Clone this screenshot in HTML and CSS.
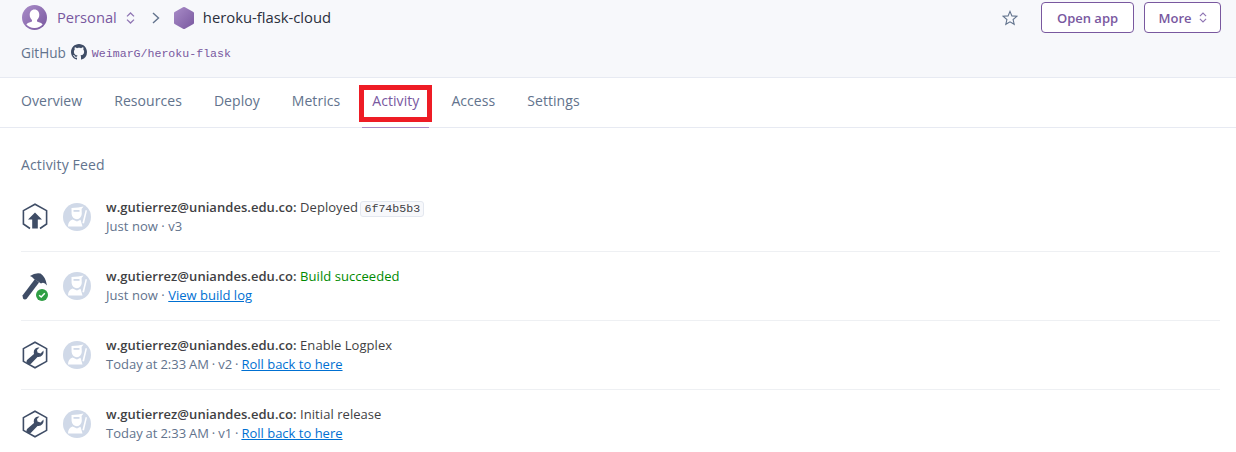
FILE: index.html
```html
<!DOCTYPE html>
<html lang="en">
<head>
<meta charset="utf-8">
<title>heroku-flask-cloud · Activity</title>
<link rel="stylesheet" href="styles.css">
</head>
<body>
<svg class="defs" width="0" height="0" aria-hidden="true">
  <defs>
    <linearGradient id="purple" x1="0" y1="0" x2="1" y2="1">
      <stop offset="0" stop-color="#a98cc8"/>
      <stop offset="1" stop-color="#79589f"/>
    </linearGradient>
    <symbol id="ninja" viewBox="0 0 28 28">
      <circle cx="14" cy="14" r="14" fill="#d0d9e8"/>
      <path d="M8.5 5 L15 4.6 L20.5 3.6 L18.6 6 L18.8 11 Q18.2 15.6 14 16.2 Q9.2 16 8.6 11 Z" fill="#fff"/>
      <path d="M10.5 7 H16.5 V8.8 H10.5 Z" fill="#d0d9e8"/>
      <path d="M5 23.4 Q5 18.4 9.6 16.6 L14 18.4 L17.5 16.8 L19.5 23.4 Z" fill="#fff"/>
      <path d="M19.4 20 L22.6 7 L24 7.4 L21 20.6 Z" fill="#fff"/>
    </symbol>
    <symbol id="wrench" viewBox="0 0 26 28">
      <path d="M13 1.2 L24.6 7.6 V20.4 L13 26.8 L1.4 20.4 V7.6 Z" fill="none" stroke="#3f4d66" stroke-width="1.6"/>
      <path d="M17.5 6.5 Q13.5 6 12 9.5 Q11.5 11.5 12 13 L5 19 Q3.8 20.5 5 22.5 Q7 24.5 9 22.8 L15.5 16 Q18.5 16.5 20.5 14 Q22 12 21.5 9.5 L18.5 12.5 L15.5 11.5 L15 9 Z" fill="#3f4d66"/>
    </symbol>
  </defs>
</svg>

<header class="app-header">
  <div class="title-row">
    <div class="crumbs">
      <svg class="account-icon" viewBox="0 0 24 24" aria-hidden="true">
        <circle cx="12" cy="12" r="12" fill="url(#purple)"/>
        <path d="M12 4.2c3 0 4.6 2.4 4.6 5.2 0 2.2-.9 4-2.2 5v1.5c2.6.8 4.6 1.6 5.4 2.9A10.4 10.4 0 0 1 12 22a10.4 10.4 0 0 1-7.8-3.2c.8-1.3 2.8-2.1 5.4-2.9v-1.5c-1.3-1-2.2-2.8-2.2-5 0-2.8 1.6-5.2 4.6-5.2z" fill="#fff"/>
      </svg>
      <span class="account-name">Personal</span>
      <svg class="updown" viewBox="0 0 9 12" aria-hidden="true"><path d="M1 4.4 L4.5 1 L8 4.4 M1 7.6 L4.5 11 L8 7.6" fill="none" stroke="#8f75b3" stroke-width="1.3"/></svg>
      <svg class="chevron" viewBox="0 0 8 12" aria-hidden="true"><path d="M1 1 L6.5 6 L1 11" fill="none" stroke="#62738d" stroke-width="1.4"/></svg>
      <svg class="app-icon" viewBox="0 0 22 24" aria-hidden="true"><path d="M11 1 Q11.6 1 12 1.2 L20.4 5.9 Q21 6.3 21 7 V17 Q21 17.7 20.4 18.1 L12 22.8 Q11 23.2 10 22.8 L1.6 18.1 Q1 17.7 1 17 V7 Q1 6.3 1.6 5.9 L10 1.2 Q10.4 1 11 1 Z" fill="url(#purple)"/></svg>
      <span class="app-name">heroku-flask-cloud</span>
    </div>
    <div class="actions">
      <svg class="star" viewBox="0 0 16 16" aria-hidden="true"><path d="M8 1.4 L9.9 5.9 L14.8 6.3 L11.1 9.5 L12.2 14.3 L8 11.8 L3.8 14.3 L4.9 9.5 L1.2 6.3 L6.1 5.9 Z" fill="none" stroke="#62738d" stroke-width="1.1"/></svg>
      <a class="btn btn-open" href="#">Open app</a>
      <a class="btn btn-more" href="#">More
        <svg class="updown-small" viewBox="0 0 9 12" aria-hidden="true"><path d="M1 4.4 L4.5 1 L8 4.4 M1 7.6 L4.5 11 L8 7.6" fill="none" stroke="#8f75b3" stroke-width="1.3"/></svg>
      </a>
    </div>
  </div>
  <div class="repo-row">
    <span class="repo-label">GitHub</span>
    <svg class="github" viewBox="0 0 16 16" aria-hidden="true"><path fill="#3f4d66" d="M8 0C3.58 0 0 3.58 0 8c0 3.54 2.29 6.53 5.47 7.59.4.07.55-.17.55-.38 0-.19-.01-.82-.01-1.49-2.01.37-2.53-.49-2.69-.94-.09-.23-.48-.94-.82-1.13-.28-.15-.68-.52-.01-.53.63-.01 1.08.58 1.23.82.72 1.21 1.87.87 2.33.66.07-.52.28-.87.51-1.07-1.78-.2-3.64-.89-3.64-3.95 0-.87.31-1.59.82-2.15-.08-.2-.36-1.02.08-2.12 0 0 .67-.21 2.2.82.64-.18 1.32-.27 2-.27s1.36.09 2 .27c1.53-1.04 2.2-.82 2.2-.82.44 1.1.16 1.92.08 2.12.51.56.82 1.27.82 2.15 0 3.07-1.87 3.75-3.65 3.95.29.25.54.73.54 1.48 0 1.07-.01 1.93-.01 2.2 0 .21.15.46.55.38A8.01 8.01 0 0 0 16 8c0-4.42-3.58-8-8-8z"/></svg>
    <a class="repo-link" href="#">WeimarG/heroku-flask</a>
  </div>
</header>

<nav class="tabs">
  <a class="tab" href="#">Overview</a>
  <a class="tab" href="#">Resources</a>
  <a class="tab" href="#">Deploy</a>
  <a class="tab" href="#">Metrics</a>
  <a class="tab tab-active" href="#">Activity<span class="highlight"></span></a>
  <a class="tab" href="#">Access</a>
  <a class="tab" href="#">Settings</a>
</nav>

<main class="feed">
  <h2 class="feed-title">Activity Feed</h2>
  <ul class="events">
    <li class="event">
      <svg class="event-icon" viewBox="0 0 26 28" aria-hidden="true">
        <path d="M8 25.5 L1.4 21 V7.6 L13 1.2 L24.6 7.6 V21 L18 25.5" fill="none" stroke="#3f4d66" stroke-width="1.6"/>
        <path d="M13 9.5 L20 16.6 H15.8 V25.5 H10.2 V16.6 H6 Z" fill="#3f4d66"/>
      </svg>
      <svg class="avatar" aria-hidden="true"><use href="#ninja"/></svg>
      <div class="event-body">
        <div class="event-line"><b class="user">w.gutierrez@uniandes.edu.co:</b> Deployed <code class="hash">6f74b5b3</code></div>
        <div class="event-meta">Just now · v3</div>
      </div>
    </li>
    <li class="event">
      <span class="build-icon">
        <svg class="event-icon" viewBox="0 0 26 28" aria-hidden="true">
          <path d="M1.5 23.5 L14 7 L18 10.5 L5.5 27 Q3.5 28 2 26.5 Z" fill="#3f4d66"/>
          <path d="M9 4 Q14 0.5 19.5 1.5 Q24.5 4.5 26 13.5 Q23 9.5 20 11.5 L13 7 Q11 4.5 9 4 Z" fill="#3f4d66"/>
        </svg>
        <svg class="check" viewBox="0 0 12 12" aria-hidden="true">
          <circle cx="6" cy="6" r="6" fill="#2f9e44"/>
          <path d="M3.2 6.2 L5.2 8 L8.8 4.2" fill="none" stroke="#fff" stroke-width="1.5"/>
        </svg>
      </span>
      <svg class="avatar" aria-hidden="true"><use href="#ninja"/></svg>
      <div class="event-body">
        <div class="event-line"><b class="user">w.gutierrez@uniandes.edu.co:</b> <span class="success">Build succeeded</span></div>
        <div class="event-meta">Just now · <a class="link" href="#">View build log</a></div>
      </div>
    </li>
    <li class="event">
      <svg class="event-icon" aria-hidden="true"><use href="#wrench"/></svg>
      <svg class="avatar" aria-hidden="true"><use href="#ninja"/></svg>
      <div class="event-body">
        <div class="event-line"><b class="user">w.gutierrez@uniandes.edu.co:</b> Enable Logplex</div>
        <div class="event-meta"><span class="stamp">Today at 2:33 AM · v2 · </span><a class="link" href="#">Roll back to here</a></div>
      </div>
    </li>
    <li class="event">
      <svg class="event-icon" aria-hidden="true"><use href="#wrench"/></svg>
      <svg class="avatar" aria-hidden="true"><use href="#ninja"/></svg>
      <div class="event-body">
        <div class="event-line"><b class="user">w.gutierrez@uniandes.edu.co:</b> Initial release</div>
        <div class="event-meta"><span class="stamp">Today at 2:33 AM · v1 · </span><a class="link" href="#">Roll back to here</a></div>
      </div>
    </li>
  </ul>
</main>
</body>
</html>
```

FILE: styles.css
```css
* { box-sizing: border-box; }
html, body { margin: 0; height: 452px; overflow: hidden; }
body {
  background: #fff;
  color: #3f3f44;
  font-family: "Open Sans", "Liberation Sans", sans-serif;
  font-size: 13px;
}
a { text-decoration: none; color: inherit; }
.defs { position: absolute; }

.app-header {
  height: 78px;
  background: #f7f8fb;
  border-bottom: 1px solid #e7eaf2;
  padding: 2px 15px 0 21px;
}
.title-row { display: flex; justify-content: space-between; align-items: center; height: 31px; }
.crumbs { display: flex; align-items: center; padding-left: 1px; }
.account-icon { width: 25px; height: 25px; margin-right: 10px; }
.account-name { font-size: 14.7px; color: #79589f; padding-bottom: 2px; }
.updown { width: 9px; height: 12px; margin-left: 9px; }
.chevron { width: 8px; height: 12px; margin-left: 17px; }
.app-icon { width: 22px; height: 24px; margin-left: 13px; }
.app-name { font-size: 14.8px; color: #2b2f3c; margin-left: 8px; padding-bottom: 2px; }
.actions { display: flex; align-items: center; }
.star { width: 16px; height: 16px; margin-right: 23px; }
.btn {
  display: flex; align-items: center; justify-content: center;
  height: 31px;
  border: 1px solid #79589f;
  border-radius: 4px;
  background: #fff;
  color: #79589f;
  font-weight: 600;
  font-size: 13px;
}
.btn-open { width: 93px; margin-right: 10px; }
.btn-more { width: 77px; }
.updown-small { width: 8px; height: 11px; margin-left: 7px; }
.repo-row { display: flex; align-items: center; margin-top: 10px; height: 18px; }
.repo-label { font-size: 13.6px; font-weight: 500; color: #62738d; margin-right: 5px; }
.github { width: 16px; height: 16px; margin-right: 5px; }
.repo-link { font-family: "Liberation Mono", "DejaVu Sans Mono", monospace; font-size: 11.6px; color: #79589f; padding-top: 3px; }

.tabs {
  display: flex;
  gap: 32px;
  height: 50px;
  padding-left: 21px;
  border-bottom: 1px solid #e7eaf2;
}
.tab {
  position: relative;
  display: flex; align-items: center;
  height: 50px;
  padding-bottom: 6px;
  font-size: 14px;
  letter-spacing: .06px;
  color: #62738d;
}
.tab-active { color: #79589f; }
.tab-active::after {
  content: "";
  position: absolute;
  left: -10px; right: -10px; bottom: 0;
  height: 1px;
  background: #a98cc8;
}
.highlight {
  position: absolute;
  left: -13px; right: -13px; top: 7px;
  height: 37px;
  border: 5px solid #ee1c25;
}

.feed { padding: 27px 16px 0 21px; }
.feed-title { margin: 0; font-size: 14px; line-height: 19px; font-weight: 400; letter-spacing: .15px; color: #62738d; }
.events { list-style: none; margin: 9px 0 0; padding: 0; }
.event {
  display: flex;
  align-items: center;
  height: 69px;
  border-bottom: 1px solid #eef0f3;
}
.event:last-child { border-bottom-color: transparent; }
.event > .event-icon { margin-left: 1px; margin-right: -1px; }
.event-icon { width: 26px; height: 28px; flex: none; display: block; }
.build-icon { position: relative; width: 26px; height: 28px; flex: none; }
.check { position: absolute; right: -1px; bottom: -1px; width: 12px; height: 12px; }
.avatar { width: 28px; height: 28px; margin-left: 16px; flex: none; }
.event-body { margin-left: 15px; letter-spacing: .05px; }
.event-line { line-height: 19px; color: #3f3f44; }
.user { font-weight: 600; }
.event-meta { line-height: 19px; color: #62738d; }
.stamp { word-spacing: -.45px; letter-spacing: 0; }
.success { color: #008a00; }
.link { color: #0070d2; text-decoration: underline; letter-spacing: 0; }
.hash {
  font-family: "Liberation Mono", "DejaVu Sans Mono", monospace;
  font-size: 11.6px;
  line-height: 14px;
  display: inline-block;
  vertical-align: baseline;
  margin-left: -1px;
  padding: 0 3px;
  background: #f7f8fb;
  border: 1px solid #e3e7ef;
  border-radius: 3px;
  letter-spacing: 0;
}
```
